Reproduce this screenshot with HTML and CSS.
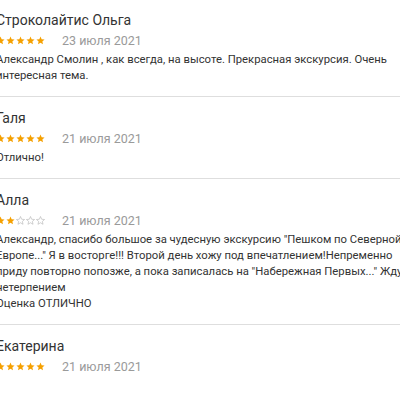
FILE: index.html
```html
<!DOCTYPE html>
<html>
  <head>
    <title>Отзывы</title>
    <meta charset="utf-8">
    <link rel="stylesheet" href="styles.css">
  </head>
  <body>
    <svg width="0" height="0" class="defs">
      <defs>
        <path id="star" d="M5 0.6l1.3 3 3.2 0.3-2.4 2.1 0.7 3.2L5 7.5 2.2 9.2l0.7-3.2L0.5 3.9l3.2-0.3z"/>
      </defs>
    </svg>
    <div class="reviews">
      <div class="review">
        <div class="name">Строколайтис Ольга</div>
        <div class="meta">
          <span class="stars">
            <svg class="on" viewBox="0 0 10 10"><use href="#star"/></svg>
            <svg class="on" viewBox="0 0 10 10"><use href="#star"/></svg>
            <svg class="on" viewBox="0 0 10 10"><use href="#star"/></svg>
            <svg class="on" viewBox="0 0 10 10"><use href="#star"/></svg>
            <svg class="on" viewBox="0 0 10 10"><use href="#star"/></svg>
          </span>
          <span class="date">23 июля 2021</span>
        </div>
        <p class="text">Александр Смолин , как всегда, на высоте. Прекрасная экскурсия. Очень интересная тема.</p>
      </div>
      <div class="review">
        <div class="name">Галя</div>
        <div class="meta">
          <span class="stars">
            <svg class="on" viewBox="0 0 10 10"><use href="#star"/></svg>
            <svg class="on" viewBox="0 0 10 10"><use href="#star"/></svg>
            <svg class="on" viewBox="0 0 10 10"><use href="#star"/></svg>
            <svg class="on" viewBox="0 0 10 10"><use href="#star"/></svg>
            <svg class="on" viewBox="0 0 10 10"><use href="#star"/></svg>
          </span>
          <span class="date">21 июля 2021</span>
        </div>
        <p class="text">Отлично!</p>
      </div>
      <div class="review">
        <div class="name">Алла</div>
        <div class="meta">
          <span class="stars">
            <svg class="on" viewBox="0 0 10 10"><use href="#star"/></svg>
            <svg class="on" viewBox="0 0 10 10"><use href="#star"/></svg>
            <svg class="off" viewBox="0 0 10 10"><use href="#star"/></svg>
            <svg class="off" viewBox="0 0 10 10"><use href="#star"/></svg>
            <svg class="off" viewBox="0 0 10 10"><use href="#star"/></svg>
          </span>
          <span class="date">21 июля 2021</span>
        </div>
        <p class="text">Александр, спасибо большое за чудесную экскурсию "Пешком по Северной Европе..." Я в восторге!!! Второй день хожу под впечатлением!Непременно приду повторно попозже, а пока записалась на "Набережная Первых..." Жду с нетерпением<br>Оценка ОТЛИЧНО</p>
      </div>
      <div class="review">
        <div class="name">Екатерина</div>
        <div class="meta">
          <span class="stars">
            <svg class="on" viewBox="0 0 10 10"><use href="#star"/></svg>
            <svg class="on" viewBox="0 0 10 10"><use href="#star"/></svg>
            <svg class="on" viewBox="0 0 10 10"><use href="#star"/></svg>
            <svg class="on" viewBox="0 0 10 10"><use href="#star"/></svg>
            <svg class="on" viewBox="0 0 10 10"><use href="#star"/></svg>
          </span>
          <span class="date">21 июля 2021</span>
        </div>
      </div>
    </div>
  </body>
</html>
```

FILE: styles.css
```css
body {
  margin: 0;
  background: #fff;
  font-family: Roboto, "Liberation Sans", sans-serif;
  color: #333;
  overflow: hidden;
}

.defs {
  position: absolute;
}

.reviews {
  margin: -2px 0 0 -4px;
  width: 430px;
}

.review {
  border-top: 1px solid #dedede;
  padding: 11px 0 12px;
}

.name {
  font-size: 14px;
  line-height: 20px;
}

.meta {
  display: flex;
  align-items: center;
  gap: 17px;
  height: 20px;
}

.meta:last-child {
  margin-bottom: 3px;
}

.stars {
  display: flex;
  gap: 1px;
}

.stars svg {
  width: 9px;
  height: 9px;
}

.stars .on {
  fill: #f5a000;
}

.stars .off {
  fill: none;
  stroke: #b5b5b5;
  stroke-width: 0.7;
}

.date {
  font-size: 12.5px;
  color: #9a9a9a;
}

.text {
  margin: 2px 0 0;
  width: 418px;
  font-size: 11.3px;
  line-height: 16px;
}
```
